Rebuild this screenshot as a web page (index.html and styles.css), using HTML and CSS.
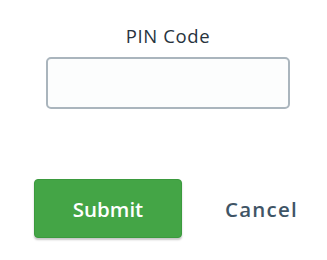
FILE: index.html
```html
<!DOCTYPE html>
<html>
<head>
<meta charset="utf-8">
<link rel="stylesheet" href="styles.css">
</head>
<body>
<form class="pin-form">
  <div class="field">
    <label class="field-label" for="pin">PIN Code</label>
    <input class="field-input" id="pin" type="text">
  </div>
  <div class="actions">
    <button type="button" class="btn-submit">Submit</button>
    <button type="button" class="btn-cancel">Cancel</button>
  </div>
</form>
</body>
</html>
```

FILE: styles.css
```css
html, body {
  margin: 0;
  padding: 0;
  background: #ffffff;
}
body {
  font-family: "Open Sans", Lato, "Liberation Sans", sans-serif;
  width: 327px;
  height: 260px;
  overflow: hidden;
}
.pin-form {
  display: flex;
  flex-direction: column;
}
.field {
  display: flex;
  flex-direction: column;
  align-items: center;
  width: 244px;
  margin-left: 46px;
  padding-top: 24px;
}
.field-label {
  font-size: 18.5px;
  color: #27333d;
  line-height: 23px;
  letter-spacing: 0.6px;
}
.field-input {
  box-sizing: border-box;
  margin-top: 10px;
  width: 244px;
  height: 52px;
  border: 2px solid #aab5bd;
  border-radius: 5px;
  background: #fcfdfd;
  outline: none;
}
.actions {
  display: flex;
  align-items: center;
  margin-top: 70px;
  margin-left: 34px;
}
.btn-submit {
  box-sizing: border-box;
  width: 148px;
  height: 59px;
  background: #44a546;
  border: 1px solid #3b9a3e;
  border-radius: 4px;
  box-shadow: 0 2px 2px rgba(0,0,0,0.22);
  color: #ffffff;
  font-family: inherit;
  font-size: 20.5px;
  font-weight: 600;
  padding: 0;
}
.btn-cancel {
  margin-left: 43px;
  background: none;
  border: none;
  padding: 0;
  color: #3f5566;
  font-family: inherit;
  font-size: 20.5px;
  font-weight: 600;
  letter-spacing: 1.2px;
}
```
